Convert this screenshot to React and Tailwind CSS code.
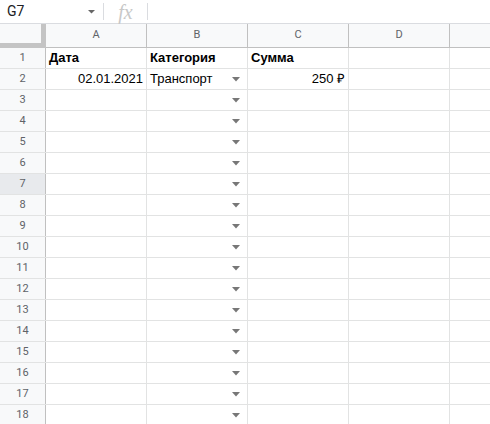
import React from 'react';

const COLS = ['A', 'B', 'C', 'D', ''];
const ROWS = Array.from({ length: 18 }, (_, i) => i + 1);

function Arrow() {
  return (
    <svg width="8" height="5" viewBox="0 0 8 5" className="shrink-0">
      <path d="M0 0 L8 0 L4 4.5 Z" fill="#777" />
    </svg>
  );
}

export default function App() {
  return (
    <div className="w-[490px] h-[424px] overflow-hidden bg-white" style={{ fontFamily: 'Arial, "Liberation Sans", sans-serif' }}>
      {/* formula bar */}
      <div className="h-[24px] flex items-center border-b border-[#dadce0]">
        <div className="w-[103px] flex items-center pl-[7px] pr-[8px] justify-between">
          <span className="text-[14px] text-[#202124]" style={{ fontFamily: 'Roboto, sans-serif' }}>G7</span>
          <svg width="7" height="4" viewBox="0 0 7 4"><path d="M0 0 L7 0 L3.5 3.5 Z" fill="#666" /></svg>
        </div>
        <div className="w-px h-[17px] bg-[#dadce0]" />
        <div className="w-[43px] flex justify-center">
          <span className="text-[20px] italic text-[#c8c8c8] leading-none" style={{ fontFamily: '"Liberation Serif", serif' }}>fx</span>
        </div>
        <div className="w-px h-[17px] bg-[#dadce0]" />
      </div>

      {/* column header */}
      <div className="flex h-[24px] bg-[#f8f9fa] border-b border-[#c0c0c0]">
        <div className="w-[46px] shrink-0 border-r-[5px] border-b-[5px] border-[#c4c4c4] -mb-px box-border h-[24px]" />
        {COLS.map((c, i) => (
          <div key={i} className="w-[101px] shrink-0 border-r border-[#c0c0c0] flex items-center justify-center text-[11px] text-[#5f6368]" style={{ fontFamily: 'Roboto, sans-serif' }}>
            {c}
          </div>
        ))}
      </div>

      {ROWS.map((r) => (
        <div key={r} className="flex h-[21px] border-b border-[#e2e3e3]">
          <div className={`w-[46px] shrink-0 border-r border-[#c0c0c0] flex items-center justify-center text-[11px] text-[#5f6368] ${r === 7 ? 'bg-[#e8eaed]' : 'bg-[#f8f9fa]'}`} style={{ fontFamily: 'Roboto, sans-serif' }}>
            {r}
          </div>
          <div className="w-[101px] shrink-0 border-r border-[#e2e3e3] flex items-center px-[3px] text-[13px] text-black">
            {r === 1 && <span className="font-bold">Дата</span>}
            {r === 2 && <span className="ml-auto">02.01.2021</span>}
          </div>
          <div className="w-[101px] shrink-0 border-r border-[#e2e3e3] flex items-center pl-[3px] pr-[7px] text-[13px] text-black">
            {r === 1 && <span className="font-bold">Категория</span>}
            {r >= 2 && (
              <>
                <span>{r === 2 ? 'Транспорт' : ''}</span>
                <span className="ml-auto"><Arrow /></span>
              </>
            )}
          </div>
          <div className="w-[101px] shrink-0 border-r border-[#e2e3e3] flex items-center px-[3px] text-[13px] text-black">
            {r === 1 && <span className="font-bold">Сумма</span>}
            {r === 2 && <span className="ml-auto">250 ₽</span>}
          </div>
          <div className="w-[101px] shrink-0 border-r border-[#e2e3e3]" />
          <div className="w-[101px] shrink-0" />
        </div>
      ))}
    </div>
  );
}
